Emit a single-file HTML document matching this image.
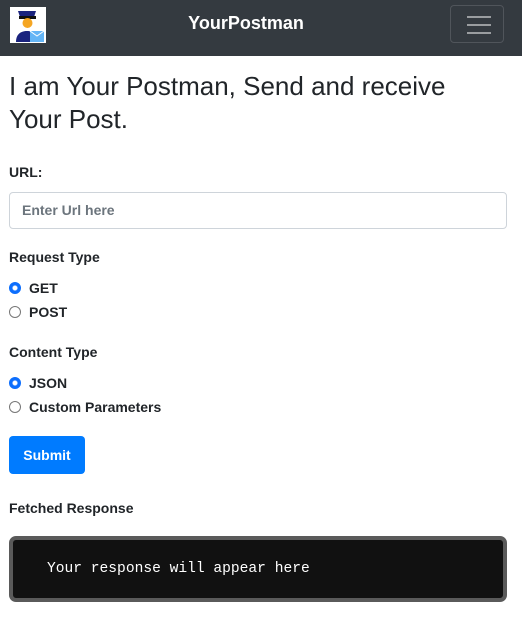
<!DOCTYPE html>
<html><head><style>
body{margin:0;width:522px;height:621px;background:#fff;font-family:"Liberation Sans",sans-serif;color:#212529;overflow:hidden}
.nav{height:56px;background:#343a40;position:relative}
.logo{position:absolute;left:10px;top:7px;width:36px;height:36px;background:#fff}
.title{position:absolute;left:0;right:0;top:13px;text-align:center;color:#fff;font-weight:bold;font-size:18px;padding-right:30px}
.burger{position:absolute;left:450px;top:5px;width:54px;height:38px;border:1px solid #50555b;border-radius:4px;box-sizing:border-box}
.burger i{position:absolute;left:16px;width:24px;height:2px;background:#9a9da0}
h1{position:absolute;left:9px;top:70px;margin:0;font-size:26px;line-height:33px;font-weight:normal;width:510px;white-space:nowrap}
.t{position:absolute;left:9px;font-size:14px;font-weight:bold}
.in{position:absolute;left:9px;top:192px;width:498px;height:37px;border:1px solid #ced4da;border-radius:4px;box-sizing:border-box;color:#6c757d;font-size:14px;font-weight:bold;padding:9px 12px}
.r{position:absolute;left:9px;font-size:14px;font-weight:bold}
.r span{display:inline-block;width:10px;height:10px;border:1px solid #777;border-radius:50%;margin-right:8px;vertical-align:-1px}
.r span.on{border:1px solid #0d6efd;background:radial-gradient(circle,#fff 2px,#0d6efd 3px)}
.btn{position:absolute;left:9px;top:436px;width:76px;height:38px;background:#007bff;border-radius:4px;color:#fff;font-weight:bold;font-size:14px;text-align:center;line-height:38px}
.resp{position:absolute;left:9px;top:536px;width:498px;height:66px;background:#111;border:4px solid #5a5a5a;border-radius:7px;box-sizing:border-box;color:#fff;font-family:"Liberation Mono",monospace;font-size:14.6px;padding:21px 0 0 34px}
</style></head><body>
<div class="nav">
<div class="logo"><svg width="36" height="36" viewBox="0 0 36 36"><path d="M8 4h18l-2 6H10z" fill="#1a237e"/><rect x="9" y="9" width="17" height="3" fill="#111"/><circle cx="17.5" cy="16" r="5" fill="#f5a623"/><path d="M6 35c0-8 5-11 11-11s11 3 11 11z" fill="#1a237e"/><rect x="20" y="24" width="14" height="11" fill="#64b5f6"/><path d="M20 24l7 5 7-5" stroke="#fff" fill="none"/></svg></div>
<div class="title">YourPostman</div>
<div class="burger"><i style="top:10px"></i><i style="top:18px"></i><i style="top:26px"></i></div>
</div>
<h1>I am Your Postman, Send and receive<br>Your Post.</h1>
<div class="t" style="top:164px">URL:</div>
<div class="in">Enter Url here</div>
<div class="t" style="top:249px">Request Type</div>
<div class="r" style="top:280px"><span class="on"></span>GET</div>
<div class="r" style="top:304px"><span></span>POST</div>
<div class="t" style="top:344px">Content Type</div>
<div class="r" style="top:375px"><span class="on"></span>JSON</div>
<div class="r" style="top:399px"><span></span>Custom Parameters</div>
<div class="btn">Submit</div>
<div class="t" style="top:500px">Fetched Response</div>
<div class="resp">Your response will appear here</div>
</body></html>
